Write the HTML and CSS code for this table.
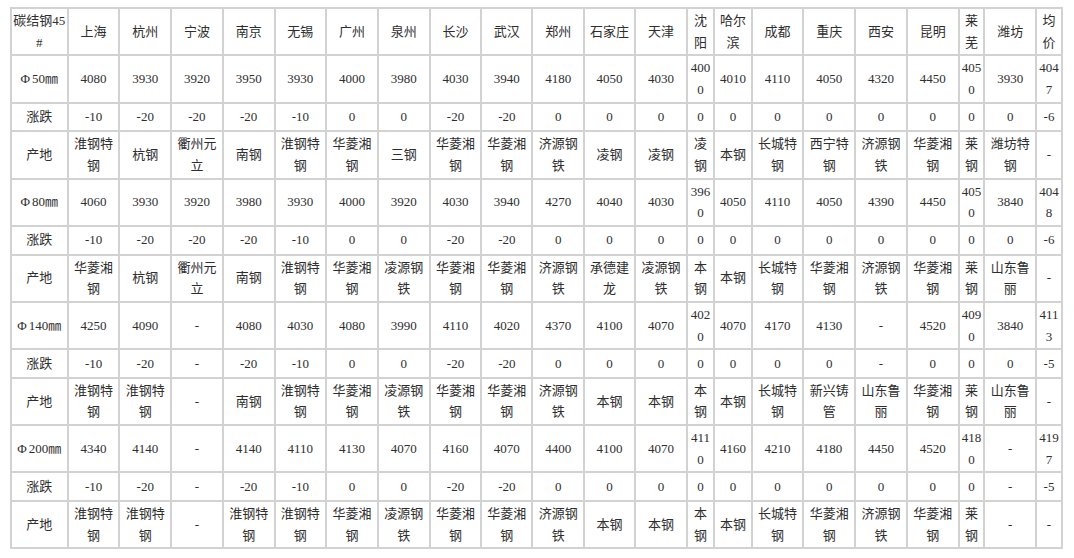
FILE: index.html
```html
<!DOCTYPE html>
<html lang="zh">
<head>
<meta charset="utf-8">
<title>碳结钢45#</title>
<link rel="stylesheet" href="styles.css">
</head>
<body>
<table class="price">
<colgroup>
<col class="c-w57"><col class="c-w52"><col class="c-w52"><col class="c-w52"><col class="c-w52"><col class="c-w52"><col class="c-w52"><col class="c-w52"><col class="c-w52"><col class="c-w51"><col class="c-w52"><col class="c-w51"><col class="c-w52"><col class="c-w27"><col class="c-w38"><col class="c-w52"><col class="c-w52"><col class="c-w52"><col class="c-w52"><col class="c-w26"><col class="c-w52"><col class="c-w26">
</colgroup>
<tbody>
<tr class="tall"><td>碳结钢45#</td><td>上海</td><td>杭州</td><td>宁波</td><td>南京</td><td>无锡</td><td>广州</td><td>泉州</td><td>长沙</td><td>武汉</td><td>郑州</td><td>石家庄</td><td>天津</td><td>沈阳</td><td>哈尔滨</td><td>成都</td><td>重庆</td><td>西安</td><td>昆明</td><td>莱芜</td><td>潍坊</td><td>均价</td></tr>
<tr class="tall"><td><span class="phi">Φ</span>50㎜</td><td>4080</td><td>3930</td><td>3920</td><td>3950</td><td>3930</td><td>4000</td><td>3980</td><td>4030</td><td>3940</td><td>4180</td><td>4050</td><td>4030</td><td>4000</td><td>4010</td><td>4110</td><td>4050</td><td>4320</td><td>4450</td><td>4050</td><td>3930</td><td>4047</td></tr>
<tr class="short"><td>涨跌</td><td>-10</td><td>-20</td><td>-20</td><td>-20</td><td>-10</td><td>0</td><td>0</td><td>-20</td><td>-20</td><td>0</td><td>0</td><td>0</td><td>0</td><td>0</td><td>0</td><td>0</td><td>0</td><td>0</td><td>0</td><td>0</td><td>-6</td></tr>
<tr class="tall"><td>产地</td><td>淮钢特钢</td><td>杭钢</td><td>衢州元立</td><td>南钢</td><td>淮钢特钢</td><td>华菱湘钢</td><td>三钢</td><td>华菱湘钢</td><td>华菱湘钢</td><td>济源钢铁</td><td>凌钢</td><td>凌钢</td><td>凌钢</td><td>本钢</td><td>长城特钢</td><td>西宁特钢</td><td>济源钢铁</td><td>华菱湘钢</td><td>莱钢</td><td>潍坊特钢</td><td>-</td></tr>
<tr class="tall"><td><span class="phi">Φ</span>80㎜</td><td>4060</td><td>3930</td><td>3920</td><td>3980</td><td>3930</td><td>4000</td><td>3920</td><td>4030</td><td>3940</td><td>4270</td><td>4040</td><td>4030</td><td>3960</td><td>4050</td><td>4110</td><td>4050</td><td>4390</td><td>4450</td><td>4050</td><td>3840</td><td>4048</td></tr>
<tr class="short"><td>涨跌</td><td>-10</td><td>-20</td><td>-20</td><td>-20</td><td>-10</td><td>0</td><td>0</td><td>-20</td><td>-20</td><td>0</td><td>0</td><td>0</td><td>0</td><td>0</td><td>0</td><td>0</td><td>0</td><td>0</td><td>0</td><td>0</td><td>-6</td></tr>
<tr class="tall"><td>产地</td><td>华菱湘钢</td><td>杭钢</td><td>衢州元立</td><td>南钢</td><td>淮钢特钢</td><td>华菱湘钢</td><td>凌源钢铁</td><td>华菱湘钢</td><td>华菱湘钢</td><td>济源钢铁</td><td>承德建龙</td><td>凌源钢铁</td><td>本钢</td><td>本钢</td><td>长城特钢</td><td>华菱湘钢</td><td>济源钢铁</td><td>华菱湘钢</td><td>莱钢</td><td>山东鲁丽</td><td>-</td></tr>
<tr class="tall"><td><span class="phi">Φ</span>140㎜</td><td>4250</td><td>4090</td><td>-</td><td>4080</td><td>4030</td><td>4080</td><td>3990</td><td>4110</td><td>4020</td><td>4370</td><td>4100</td><td>4070</td><td>4020</td><td>4070</td><td>4170</td><td>4130</td><td>-</td><td>4520</td><td>4090</td><td>3840</td><td>4113</td></tr>
<tr class="short"><td>涨跌</td><td>-10</td><td>-20</td><td>-</td><td>-20</td><td>-10</td><td>0</td><td>0</td><td>-20</td><td>-20</td><td>0</td><td>0</td><td>0</td><td>0</td><td>0</td><td>0</td><td>0</td><td>-</td><td>0</td><td>0</td><td>0</td><td>-5</td></tr>
<tr class="tall"><td>产地</td><td>淮钢特钢</td><td>淮钢特钢</td><td>-</td><td>南钢</td><td>淮钢特钢</td><td>华菱湘钢</td><td>凌源钢铁</td><td>华菱湘钢</td><td>华菱湘钢</td><td>济源钢铁</td><td>本钢</td><td>本钢</td><td>本钢</td><td>本钢</td><td>长城特钢</td><td>新兴铸管</td><td>山东鲁丽</td><td>华菱湘钢</td><td>莱钢</td><td>山东鲁丽</td><td>-</td></tr>
<tr class="tall"><td><span class="phi">Φ</span>200㎜</td><td>4340</td><td>4140</td><td>-</td><td>4140</td><td>4110</td><td>4130</td><td>4070</td><td>4160</td><td>4070</td><td>4400</td><td>4100</td><td>4070</td><td>4110</td><td>4160</td><td>4210</td><td>4180</td><td>4450</td><td>4520</td><td>4180</td><td>-</td><td>4197</td></tr>
<tr class="short"><td>涨跌</td><td>-10</td><td>-20</td><td>-</td><td>-20</td><td>-10</td><td>0</td><td>0</td><td>-20</td><td>-20</td><td>0</td><td>0</td><td>0</td><td>0</td><td>0</td><td>0</td><td>0</td><td>0</td><td>0</td><td>0</td><td>-</td><td>-5</td></tr>
<tr class="tall"><td>产地</td><td>淮钢特钢</td><td>淮钢特钢</td><td>-</td><td>淮钢特钢</td><td>淮钢特钢</td><td>华菱湘钢</td><td>凌源钢铁</td><td>华菱湘钢</td><td>华菱湘钢</td><td>济源钢铁</td><td>本钢</td><td>本钢</td><td>本钢</td><td>本钢</td><td>长城特钢</td><td>华菱湘钢</td><td>济源钢铁</td><td>华菱湘钢</td><td>莱钢</td><td>-</td><td>-</td></tr>
</tbody>
</table>
</body>
</html>
```

FILE: styles.css
```css
html, body {
  margin: 0;
  padding: 0;
  background: #ffffff;
}

body {
  padding: 7px 0 0 10px;
  font-family: "Liberation Serif", "Noto Sans CJK SC", serif;
  font-size: 13px;
  color: #2e2e2e;
}

.price {
  border-collapse: collapse;
  table-layout: fixed;
  width: 1053px;
}

.price td {
  border: 2px solid #d2d2d2;
  padding: 0 1px;
  text-align: center;
  vertical-align: middle;
  line-height: 21.5px;
  word-break: break-all;
  overflow-wrap: anywhere;
}

.price tr.tall {
  height: 47.3px;
}

.price tr.short {
  height: 28.7px;
}

.phi {
  margin-right: 2px;
}

.c-w57 { width: 56.7px; }
.c-w52 { width: 51.7px; }
.c-w51 { width: 51px; }
.c-w38 { width: 37.7px; }
.c-w27 { width: 27.3px; }
.c-w26 { width: 25.8px; }
```
